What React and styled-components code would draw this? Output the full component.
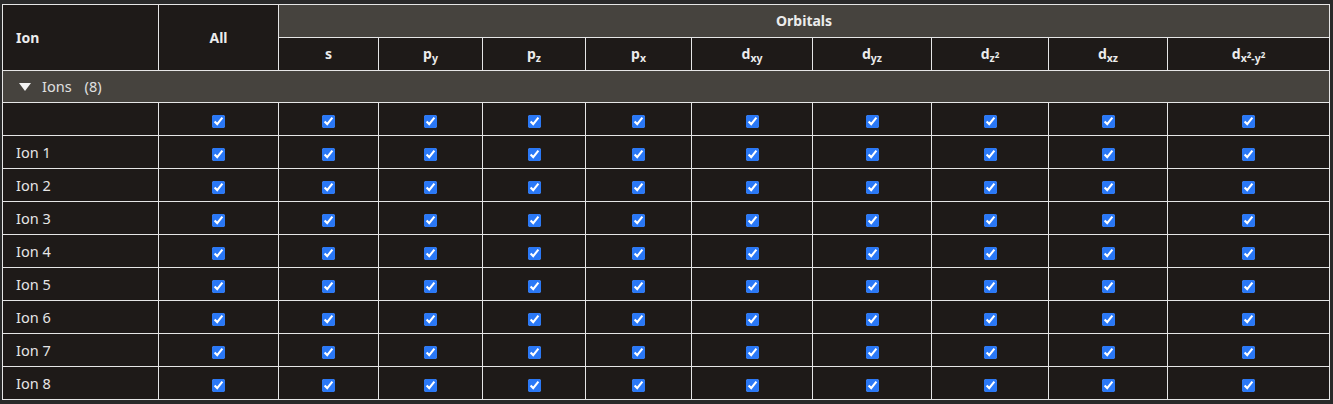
import React from "react";
import styled, { createGlobalStyle } from "styled-components";

const Global = createGlobalStyle`
  html, body { margin: 0; padding: 0; background: #292929; }
  body { font-family: "Noto Sans", "Open Sans", sans-serif; }
`;

const Page = styled.div`
  padding: 4px 4px 4px 2px;
`;

const Table = styled.table`
  border-collapse: collapse;
  table-layout: fixed;
  width: 1327px;
  color: #e6e6e6;
  font-size: 14.5px;
  line-height: 18px;
`;

const HeadCell = styled.th`
  border: 1px solid #e6e6e6;
  background: ${(p) => (p.$grey ? "#46433e" : "#1e1a18")};
  height: 32px;
  padding: 0 ${(p) => (p.$left ? "13px" : "4px")};
  text-align: ${(p) => (p.$left ? "left" : "center")};
  font-weight: 700;
  font-size: 14px;
  color: #ececec;
  white-space: nowrap;
`;

const Cell = styled.td`
  border: 1px solid #e6e6e6;
  background: #1e1a18;
  height: 32px;
  padding: 0 ${(p) => (p.$left ? "13px" : "4px")};
  text-align: ${(p) => (p.$left ? "left" : "center")};
  vertical-align: middle;
  white-space: nowrap;
`;

const GroupCell = styled.td`
  border: 1px solid #e6e6e6;
  background: #46433e;
  height: 31px;
  padding: 0 0 0 16px;
  color: #e0e0e0;
`;

const GroupLabel = styled.span`
  display: inline-flex;
  align-items: center;
  position: relative;
  top: -1px;
`;

const Caret = styled.span`
  width: 0;
  height: 0;
  border-left: 6px solid transparent;
  border-right: 6px solid transparent;
  border-top: 8px solid #f2f2f2;
  margin-right: 11px;
  margin-top: 1px;
`;

const Count = styled.span`
  margin-left: 13px;
`;

const Check = styled.input`
  width: 13px;
  height: 13px;
  margin: 0;
  vertical-align: middle;
  accent-color: #2a78f6;
  color-scheme: light;
`;

const Sub = styled.sub`
  font-size: 10.5px;
  vertical-align: -3px;
  line-height: 0;
  font-weight: 700;
`;

const Sup = styled.sup`
  font-size: 8px;
  vertical-align: 4px;
  line-height: 0;
`;

const widths = [156, 120, 100, 104, 103, 106, 121, 119, 117, 119, 162];

const orbitals = [
  <>s</>,
  <>p<Sub>y</Sub></>,
  <>p<Sub>z</Sub></>,
  <>p<Sub>x</Sub></>,
  <>d<Sub>xy</Sub></>,
  <>d<Sub>yz</Sub></>,
  <>d<Sub>z<Sup>2</Sup></Sub></>,
  <>d<Sub>xz</Sub></>,
  <>d<Sub>x<Sup>2</Sup>-y<Sup>2</Sup></Sub></>,
];

const rows = ["", "Ion 1", "Ion 2", "Ion 3", "Ion 4", "Ion 5", "Ion 6", "Ion 7", "Ion 8"];

export default function App() {
  return (
    <Page>
      <Global />
      <Table>
        <colgroup>
          {widths.map((w, i) => (
            <col key={i} style={{ width: w }} />
          ))}
        </colgroup>
        <thead>
          <tr>
            <HeadCell rowSpan={2} $left>Ion</HeadCell>
            <HeadCell rowSpan={2}>All</HeadCell>
            <HeadCell colSpan={9} $grey>Orbitals</HeadCell>
          </tr>
          <tr>
            {orbitals.map((o, i) => (
              <HeadCell key={i}>{o}</HeadCell>
            ))}
          </tr>
        </thead>
        <tbody>
          <tr>
            <GroupCell colSpan={11}>
              <GroupLabel>
                <Caret />
                Ions
                <Count>(8)</Count>
              </GroupLabel>
            </GroupCell>
          </tr>
          {rows.map((r, i) => (
            <tr key={i}>
              <Cell $left>{r}</Cell>
              {widths.slice(1).map((_, j) => (
                <Cell key={j}>
                  <Check type="checkbox" checked readOnly />
                </Cell>
              ))}
            </tr>
          ))}
        </tbody>
      </Table>
    </Page>
  );
}
